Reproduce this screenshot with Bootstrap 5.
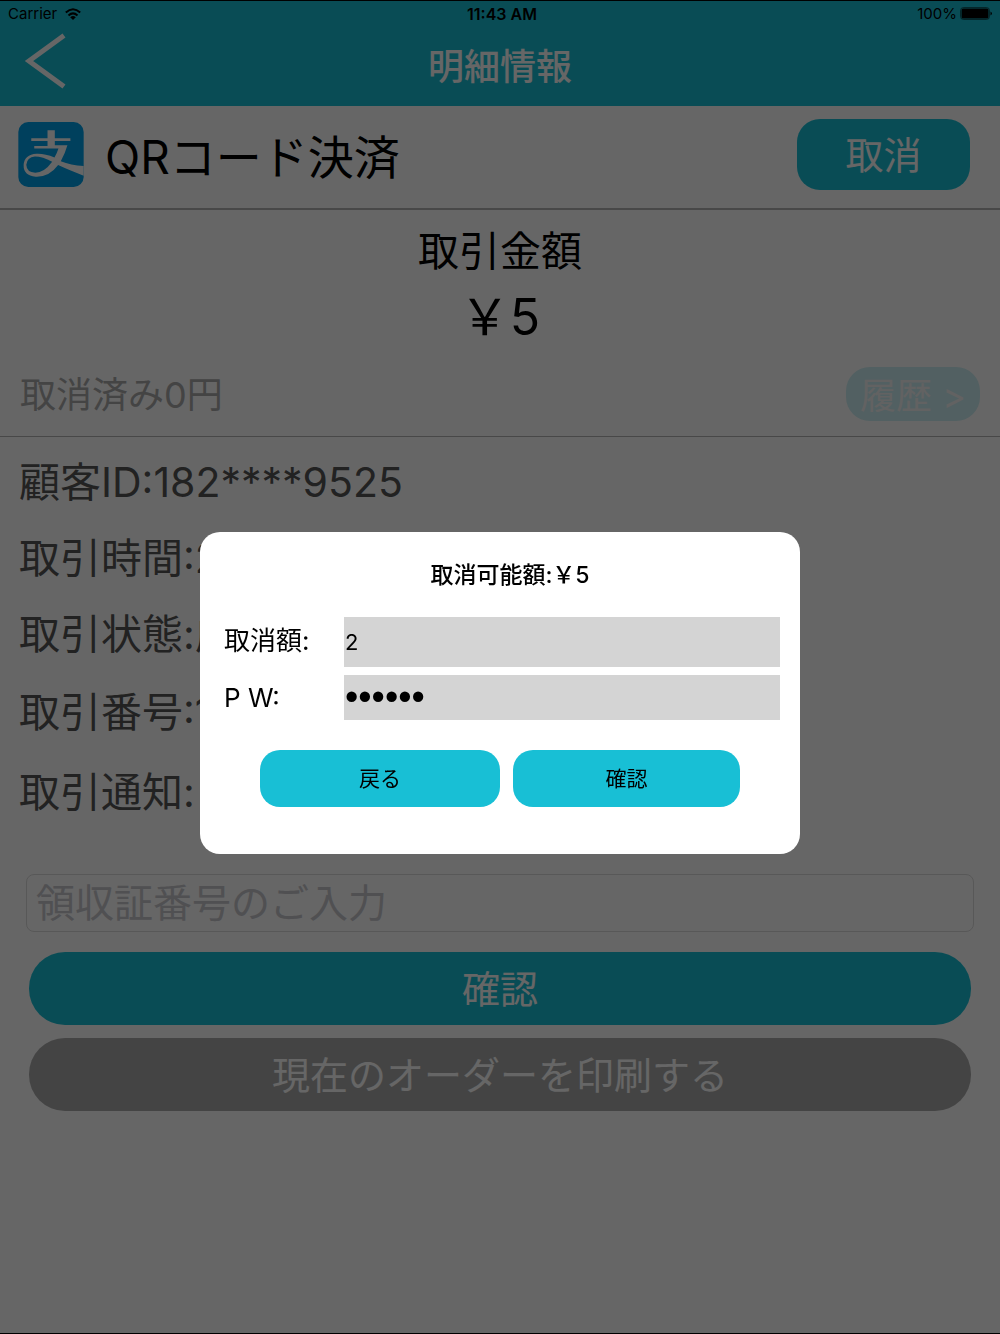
<!DOCTYPE html>
<html lang="ja">
<head>
<meta charset="utf-8">
<meta name="viewport" content="width=device-width, initial-scale=1">
<title>明細情報</title>
<link href="https://cdn.jsdelivr.net/npm/bootstrap@5.3.0/dist/css/bootstrap.min.css" rel="stylesheet">
<style>
  :root { --teal: #18bfd5; }
  body { font-family: Inter, "Noto Sans CJK JP", sans-serif; color: #000; background: #fff; font-weight: 390; }
  .screen { border-top: 1px solid #000; border-bottom: 1px solid #000; }
  .topbar { background: var(--teal); height: 105px; }
  .status { height: 26px; font-size: 15px; line-height: 26px; padding: 0 8px; font-weight: 400; }
  .status > * { flex: 1 1 0; }
  .status .clock { font-size: 16px; padding-left: 4px; }
  .status .power { gap: 3px; }
  .titlebar { height: 79px; padding: 0 24px; }
  .titlebar > .side { flex: 1 1 0; }
  .titlebar h1 { font-size: 36px; line-height: 79px; font-weight: 500; color: #fff; padding-top: 2px; }
  .back svg { display: block; margin-top: -6px; }
  .method { height: 104px; padding: 0 30px 6px 18px; border-bottom: 2px solid #b4b4b4; }
  .method h2 { font-size: 46px; line-height: 64px; font-weight: 390; margin-left: 21px; padding-top: 6px; }
  .btn { --bs-btn-font-weight: 390; }
  .btn-teal { background: var(--teal); color: #fff; border: 0; }
  .btn-void { width: 173px; height: 71px; border-radius: 23px; font-size: 38px; line-height: 48px; padding: 8px 0 6px; }
  .amount { height: 227px; padding-top: 8px; border-bottom: 1px solid #b4b4b4; }
  .amount-label { font-size: 41px; line-height: 66px; }
  .amount-value { font-size: 50px; line-height: 66px; font-weight: 390; }
  .voided { padding: 16px 20px 0 20px; font-size: 36px; line-height: 54px; color: #aaa; }
  .voided span { padding-top: 2px; }
  .btn-history { width: 134px; height: 54px; border-radius: 24px; font-size: 36px; line-height: 36px; background: #cdf0f4; color: #f5f5f5; border: 0; padding: 4px 0 0; }
  .details { padding: 7px 19px 0; font-size: 41px; color: #555; }
  .details li { line-height: 76px; }
  .details li.tall { line-height: 80px; }
  .actions { padding: 42px 29px 0; }
  .receipt { margin: 0 -3px 20px; width: auto; align-self: stretch; height: 58px; padding: 0 9px; font-size: 39px; font-weight: 390; border: 1px solid #dcdcdc; border-radius: 8px; }
  .receipt::placeholder { color: #c7c7cd; }
  .btn-wide { height: 73px; font-size: 38px; line-height: 48px; border-radius: 36px; margin-bottom: 13px; }
  .btn-print { background: #aaa; color: #fff; border: 0; }
  .modal { padding-top: 52px; background: rgba(0, 0, 0, .6); }
  .modal-dialog { --bs-modal-width: 600px; }
  .modal-content { border: 0; border-radius: 20px; padding: 25px 20px 47px 24px; font-weight: 390; }
  .modal-content h3 { font-size: 23px; line-height: 36px; font-weight: 500; margin: 0 0 24px 16px; }
  .field label { flex: 0 0 120px; font-size: 26px; padding-top: 4px; }
  .field .pw-label { padding: 0; }
  .field input { background: #d4d4d4; border: 0; border-radius: 0; padding: 0 1px; font-size: 22px; font-weight: 390; color: #000; }
  .field .sum { height: 50px; margin-bottom: 8px; }
  .field .pass { height: 45px; font-family: "Liberation Sans", sans-serif; font-size: 38px; }
  .choices { gap: 13px; margin-top: 30px; padding: 0 40px 0 36px; }
  .choices .btn { height: 57px; border-radius: 20px; font-size: 21px; line-height: 30px; color: #000; padding: 0; flex: 227 1 0; }
  .choices .btn-return { flex-grow: 240; }
</style>
</head>
<body>
<div class="screen min-vh-100">
  <header class="topbar">
    <div class="status d-flex">
      <div class="d-flex align-items-center gap-2">
        <span>Carrier</span>
        <svg width="16" height="12" viewBox="0 0 16 12" fill="none" stroke="#000" stroke-width="2" aria-hidden="true"><path d="M.8 4.600Q8-2 15.200 4.600M3.500 7.400Q8 3.300 12.500 7.400"/><path d="M8 12 5.200 9.200Q8 6.800 10.800 9.200Z" fill="#000" stroke="none"/></svg>
      </div>
      <div class="clock text-center fw-semibold">11:43 AM</div>
      <div class="power d-flex align-items-center justify-content-end">
        <span>100%</span>
        <svg width="32" height="14" viewBox="0 0 32 14" aria-hidden="true"><rect x=".5" y=".5" width="29" height="12" rx="3" fill="none" stroke="#000" stroke-opacity=".5"/><rect x="1.500" y="1.500" width="27" height="10" rx="1.500"/><path d="M30.500 4.500q3 2 0 4z"/></svg>
      </div>
    </div>
    <div class="titlebar d-flex align-items-center">
      <div class="side"><a class="back d-inline-block" href="#" aria-label="戻る"><svg width="44" height="56" viewBox="0 0 44 56" fill="none" stroke="#fff" stroke-width="5"><path d="M40 2.500 5 28l35 25.500"/></svg></a></div>
      <h1 class="m-0">明細情報</h1>
      <div class="side"></div>
    </div>
  </header>

  <main>
    <section class="method d-flex align-items-center">
      <svg width="66" height="65" viewBox="54 35 197 196" aria-hidden="true">
        <rect x="54" y="35" width="197" height="196" rx="30" fill="#00a0e9"/>
        <path fill="#fff" d="M142 60h22v24h47v8h-47v13h38q-7 25-20 48 30 12 69 15v29q-45-17-77-32-27 37-68 35-37-3-36-35 2-32 39-34 25-1 54 11 8-14 12-27h-73v-8h40V92H93v-8h49z"/>
        <path d="M156 155q-29-16-52-16-24 2-26 25 1 23 27 24 27 0 51-33z" fill="#00a0e9"/>
      </svg>
      <h2 class="mb-0 me-auto">QRコード決済</h2>
      <button type="button" class="btn btn-teal btn-void">取消</button>
    </section>

    <section class="amount">
      <div class="amount-label text-center">取引金額</div>
      <div class="amount-value text-center">&#65509;5</div>
      <div class="voided d-flex justify-content-between align-items-center">
        <span>取消済み0円</span>
        <button type="button" class="btn btn-history">履歴 &gt;</button>
      </div>
    </section>

    <ul class="details list-unstyled mb-0">
      <li>顧客ID:182****9525</li>
      <li>取引時間:2</li>
      <li>取引状態:成</li>
      <li class="tall">取引番号:1</li>
      <li class="tall">取引通知:</li>
    </ul>

    <form class="actions d-flex flex-column">
      <input type="text" class="form-control receipt" placeholder="領収証番号のご入力" aria-label="領収証番号">
      <button type="button" class="btn btn-teal btn-wide">確認</button>
      <button type="button" class="btn btn-print btn-wide">現在のオーダーを印刷する</button>
    </form>
  </main>
</div>

<div class="modal d-block" tabindex="-1" role="dialog" aria-labelledby="refundTitle">
  <div class="modal-dialog modal-dialog-centered">
    <form class="modal-content">
      <h3 class="text-center" id="refundTitle">取消可能額:&#65509;5</h3>
      <div class="field d-flex">
        <label for="refundSum">取消額:</label>
        <input type="text" id="refundSum" class="form-control sum" value="2">
      </div>
      <div class="field d-flex align-items-center">
        <label class="pw-label" for="refundPw">P W:</label>
        <input type="password" id="refundPw" class="form-control pass" value="123456" autocomplete="off">
      </div>
      <div class="choices d-flex">
        <button type="button" class="btn btn-teal btn-return">戻る</button>
        <button type="button" class="btn btn-teal">確認</button>
      </div>
    </form>
  </div>
</div>
<script src="https://cdn.jsdelivr.net/npm/bootstrap@5.3.0/dist/js/bootstrap.bundle.min.js"></script>
</body>
</html>
